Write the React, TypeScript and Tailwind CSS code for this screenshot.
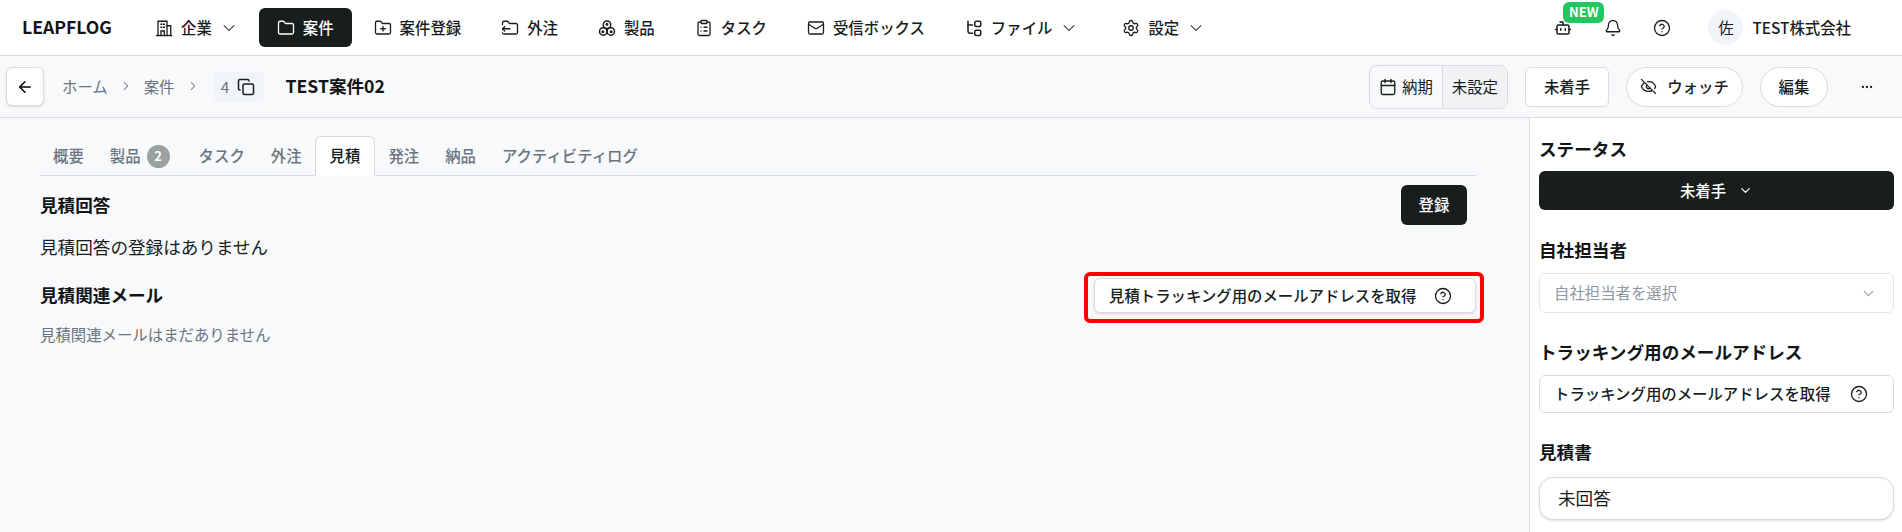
import { ArrowLeft, Bell, Bot, Calendar, ChevronDown, ChevronRight, CircleHelp, ClipboardList, Copy, Ellipsis, EyeOff, Folder, FolderOutput, FolderPlus, Mail, Settings } from 'lucide-react'
import type { ReactNode } from 'react'

function CompanyIcon() {
  return (
    <svg width="18" height="18" viewBox="0 0 24 24" fill="none" stroke="currentColor" strokeWidth="1.75" strokeLinecap="square">
      <path d="M2 22h20" />
      <path d="M4 22V3h12v19" />
      <path d="M16 9h5v13" />
      <path d="M8 7h1M11.500 7h1M8 11h1M11.500 11h1" />
      <path d="M8 22v-6h4.500v6" />
    </svg>
  )
}

function CirclesIcon() {
  return (
    <svg width="18" height="18" viewBox="0 0 24 24" fill="none" stroke="currentColor" strokeWidth="2">
      <circle cx="12" cy="7.500" r="5" />
      <circle cx="7" cy="16.500" r="5" />
      <circle cx="17" cy="16.500" r="5" />
      <circle cx="12" cy="7" r="1" fill="currentColor" />
      <circle cx="6.500" cy="17" r="1" fill="currentColor" />
      <circle cx="17.500" cy="17" r="1" fill="currentColor" />
    </svg>
  )
}

function FileTreeIcon() {
  return (
    <svg width="18" height="18" viewBox="0 0 24 24" fill="none" stroke="currentColor" strokeWidth="2" strokeLinecap="round" strokeLinejoin="round">
      <path d="M4 3v13a3 3 0 0 0 3 3h3" />
      <path d="M4 8h6" />
      <rect x="13" y="3" width="8" height="7" rx="2" />
      <rect x="13" y="15" width="8" height="7" rx="2" />
    </svg>
  )
}

function NavItem({ icon, label, active, caret, className = '' }: { icon: ReactNode; label: string; active?: boolean; caret?: boolean; className?: string }) {
  return (
    <div className={`flex h-[39px] items-center gap-[8px] rounded-md px-[18px] text-[15.4px] font-medium ${active ? 'bg-[#181d1e] text-white' : 'text-[#181d1e]'} ${className}`}>
      {icon}
      <span>{label}</span>
      {caret && <ChevronDown size={20} strokeWidth={1.25} className="-mr-[2px] -ml-[1px]" />}
    </div>
  )
}

function Tab({ label, active, badge }: { label: string; active?: boolean; badge?: string }) {
  return (
    <div className={`-mb-px flex h-10 items-center gap-[6px] rounded-t-md border text-[15.4px] font-medium ${active ? 'border-[#d5dae2] border-b-white bg-white px-[14px] text-[#181d1e]' : 'border-transparent px-[12px] text-[#69747f]'}`}>
      <span>{label}</span>
      {badge && <span className="mr-[3px] flex h-[23px] w-[23px] items-center justify-center rounded-full bg-[#98a2a0] text-[13px] font-bold text-white">{badge}</span>}
    </div>
  )
}

function SideLabel({ children }: { children: ReactNode }) {
  return <h3 className="text-[17.6px] leading-[26px] font-bold text-[#111516]">{children}</h3>
}

export default function App() {
  return (
    <div className="flex h-[532px] flex-col overflow-hidden bg-white font-['Noto_Sans_CJK_JP',sans-serif]">
      {/* グローバルナビ */}
      <header className="flex h-[56px] shrink-0 items-center border-b border-[#d8dbe0] bg-white pr-[51px] pl-[22px]">
        <div className="w-[115px] text-[17.6px] font-semibold text-[#111516]">LEAPFLOG</div>
        <nav className="flex items-center gap-[4px]">
          <NavItem icon={<CompanyIcon />} label="企業" caret />
          <NavItem icon={<Folder size={18} strokeWidth={1.75} />} label="案件" active />
          <NavItem icon={<FolderPlus size={18} strokeWidth={1.75} />} label="案件登録" />
          <NavItem icon={<FolderOutput size={18} strokeWidth={1.75} />} label="外注" />
          <NavItem icon={<CirclesIcon />} label="製品" />
          <NavItem icon={<ClipboardList size={18} strokeWidth={1.75} />} label="タスク" />
          <NavItem icon={<Mail size={18} strokeWidth={1.75} />} label="受信ボックス" />
          <NavItem icon={<FileTreeIcon />} label="ファイル" caret className="mr-[5px]" />
          <NavItem icon={<Settings size={18} strokeWidth={1.75} />} label="設定" caret />
        </nav>
        <div className="ml-auto flex items-center text-[#181d1e]">
          <div className="relative mr-[32px]">
            <Bot size={18} strokeWidth={2} />
            <span className="absolute -top-[17px] left-[9px] flex h-[21px] w-[41px] items-center justify-center rounded-md bg-[#22c55e] text-[13px] font-semibold text-white">NEW</span>
          </div>
          <Bell size={18} strokeWidth={1.75} className="mr-[31px]" />
          <CircleHelp size={18} strokeWidth={1.75} className="mr-[37px]" />
          <div className="mr-[9px] flex h-[35px] w-[35px] items-center justify-center rounded-full bg-[#f1f4f9] text-[15.4px]">佐</div>
          <span className="text-[15.4px] font-medium">TEST株式会社</span>
        </div>
      </header>

      {/* 案件ヘッダー */}
      <div className="flex h-[62px] shrink-0 items-center border-b border-[#d8dbe0] bg-[#f8f9fb] pr-[28px] pl-[6px]">
        <button className="mr-[18px] flex h-[39px] w-[38px] items-center justify-center rounded-md border border-[#d8dbe0] bg-white shadow-sm">
          <ArrowLeft size={18} />
        </button>
        <div className="flex items-center text-[15.4px] text-[#69747f]">
          <span>ホーム</span>
          <ChevronRight size={14} strokeWidth={1.75} className="mx-[11px]" />
          <span>案件</span>
          <ChevronRight size={14} strokeWidth={1.75} className="mr-[13px] ml-[11px]" />
        </div>
        <div className="mr-[22px] flex h-[31px] w-[51px] items-center justify-center gap-[8px] rounded bg-[#f1f4f9] text-[15.4px] text-[#69747f]">
          4
          <Copy size={18} strokeWidth={2} className="text-[#181d1e]" />
        </div>
        <h1 className="text-[17.6px] font-semibold text-[#111516]">TEST案件02</h1>
        <div className="ml-auto flex items-center">
          <div className="mr-[17px] flex h-[44px] items-stretch overflow-hidden rounded-lg border border-[#d8dbe0] text-[15.4px] text-[#181d1e]">
            <div className="flex items-center gap-[5px] px-[9px]">
              <Calendar size={18} strokeWidth={1.75} />
              納期
            </div>
            <div className="flex items-center border-l border-[#d8dbe0] bg-[#f1f2f4] px-[9px]">未設定</div>
          </div>
          <button className="mr-[17px] flex h-[40px] w-[84px] items-center justify-center rounded-md border border-[#d8dbe0] bg-white text-[15.4px] font-medium text-[#181d1e]">未着手</button>
          <button className="mr-[17px] flex h-[40px] w-[117px] items-center justify-center gap-[10px] rounded-full border border-[#d8dbe0] bg-white text-[15.4px] font-medium text-[#181d1e]">
            <EyeOff size={17} strokeWidth={1.75} />
            ウォッチ
          </button>
          <button className="mr-[32px] flex h-[40px] w-[68px] items-center justify-center rounded-full border border-[#d8dbe0] bg-white text-[15.4px] font-medium text-[#181d1e]">編集</button>
          <Ellipsis size={14} className="text-[#181d1e]" />
        </div>
      </div>

      <div className="flex min-h-0 flex-1">
        {/* 見積タブ */}
        <main className="w-[1530px] shrink-0 border-r border-[#d8dbe0] bg-[#f8f9fb] pt-[18px] pr-[53px] pl-[40px]">
          <div className="flex items-end border-b border-[#d5dae2]">
            <Tab label="概要" />
            <Tab label="製品" badge="2" />
            <Tab label="タスク" />
            <Tab label="外注" />
            <Tab label="見積" active />
            <Tab label="発注" />
            <Tab label="納品" />
            <Tab label="アクティビティログ" />
          </div>
          <div className="mt-[9px] mr-[9px] flex h-[40px] items-center justify-between">
            <h2 className="text-[17.6px] font-bold text-[#111516]">見積回答</h2>
            <button className="flex h-[40px] w-[66px] items-center justify-center rounded-md bg-[#181d1e] text-[15.4px] font-medium text-white">登録</button>
          </div>
          <p className="mt-[9px] text-[17.6px] leading-[26px] text-[#181d1e]">見積回答の登録はありません</p>
          <div className="mt-[12px] flex items-start justify-between">
            <h2 className="mt-[10px] text-[17.6px] font-bold text-[#111516]">見積関連メール</h2>
            <div className="-mr-[8px] rounded-md border-4 border-[#ff0000] pt-[2px] pr-[4px] pb-[6px] pl-[6px]">
              <button className="flex h-[35px] w-[382px] items-center gap-[18px] rounded-md border border-[#d8dbe0] bg-white pl-[14px] text-[15.4px] font-medium text-[#181d1e] shadow-sm">
                見積トラッキング用のメールアドレスを取得
                <CircleHelp size={18} strokeWidth={1.75} />
              </button>
            </div>
          </div>
          <p className="text-[15.4px] text-[#69747f]">見積関連メールはまだありません</p>
        </main>

        {/* サイドバー */}
        <aside className="flex-1 bg-white pt-[18px] pr-[8px] pl-[9px]">
          <SideLabel>ステータス</SideLabel>
          <button className="mt-[9px] flex h-[39px] w-full items-center justify-center gap-[12px] rounded-md bg-[#181d1e] text-[15.4px] font-medium text-white">
            未着手
            <ChevronDown size={15} />
          </button>
          <div className="mt-[27px]">
            <SideLabel>自社担当者</SideLabel>
          </div>
          <div className="mt-[10px] flex h-[40px] w-full items-center justify-between rounded-md border border-[#e2e5ea] bg-white pr-[16px] pl-[14px] text-[15.4px] text-[#8f98a3]">
            自社担当者を選択
            <ChevronDown size={17} strokeWidth={1.5} />
          </div>
          <div className="mt-[26px]">
            <SideLabel>トラッキング用のメールアドレス</SideLabel>
          </div>
          <button className="mt-[10px] flex h-[38px] w-full items-center gap-[19px] rounded-md border border-[#d8dbe0] bg-white pl-[14px] text-[15.4px] font-medium text-[#181d1e]">
            トラッキング用のメールアドレスを取得
            <CircleHelp size={18} strokeWidth={1.75} />
          </button>
          <div className="mt-[26px]">
            <SideLabel>見積書</SideLabel>
          </div>
          <div className="mt-[12px] flex h-[43px] w-full items-center rounded-[14px] border border-[#d8dbe0] bg-white px-[18px] text-[17.6px] text-[#181d1e] shadow-sm">未回答</div>
        </aside>
      </div>
    </div>
  )
}
